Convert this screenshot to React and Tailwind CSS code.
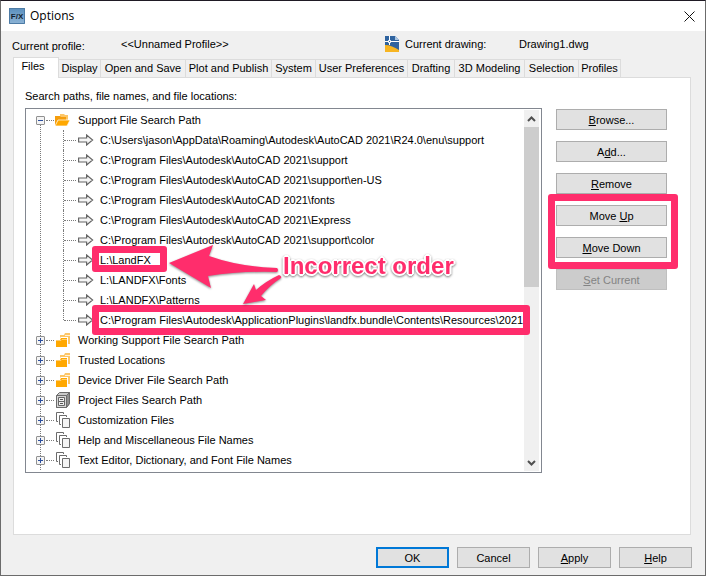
import { useState } from "react";
import clsx from "clsx";

const tabs = [
  { name: "Files", width: "w-[46px]" },
  { name: "Display", width: "w-[42px]" },
  { name: "Open and Save", width: "w-[85px]" },
  { name: "Plot and Publish", width: "w-[86px]" },
  { name: "System", width: "w-[44px]" },
  { name: "User Preferences", width: "w-[92px]" },
  { name: "Drafting", width: "w-[47px]" },
  { name: "3D Modeling", width: "w-[70px]" },
  { name: "Selection", width: "w-[54px]" },
  { name: "Profiles", width: "w-[42px]" },
];

const supportPaths = [
  "C:\\Users\\jason\\AppData\\Roaming\\Autodesk\\AutoCAD 2021\\R24.0\\enu\\support",
  "C:\\Program Files\\Autodesk\\AutoCAD 2021\\support",
  "C:\\Program Files\\Autodesk\\AutoCAD 2021\\support\\en-US",
  "C:\\Program Files\\Autodesk\\AutoCAD 2021\\fonts",
  "C:\\Program Files\\Autodesk\\AutoCAD 2021\\Express",
  "C:\\Program Files\\Autodesk\\AutoCAD 2021\\support\\color",
  "L:\\LandFX",
  "L:\\LANDFX\\Fonts",
  "L:\\LANDFX\\Patterns",
  "C:\\Program Files\\Autodesk\\ApplicationPlugins\\landfx.bundle\\Contents\\Resources\\2021",
];

const nodes = [
  { name: "Support File Search Path", Icon: OpenFolderIcon, paths: supportPaths },
  { name: "Working Support File Search Path", Icon: FoldersIcon },
  { name: "Trusted Locations", Icon: FoldersIcon },
  { name: "Device Driver File Search Path", Icon: FoldersIcon },
  { name: "Project Files Search Path", Icon: CabinetIcon },
  { name: "Customization Files", Icon: PagesIcon },
  { name: "Help and Miscellaneous File Names", Icon: PagesIcon },
  { name: "Text Editor, Dictionary, and Font File Names", Icon: PagesIcon },
];

function OpenFolderIcon() {
  return (
    <svg width="16" height="16" viewBox="0 0 16 16" className="shrink-0">
      <path d="M5 2h4l1 1h3v5H5z" fill="#fdc667" />
      <path d="M0 4h5l1 1h5v3H3l-2 5H0z" fill="#f59d0c" />
      <path d="M3 8h12l-3 6H0z" fill="#ffa800" stroke="#fff" strokeWidth="0.7" />
    </svg>
  );
}

function FoldersIcon() {
  return (
    <svg width="16" height="16" viewBox="0 0 16 16" className="shrink-0">
      <path d="M5 3h4l1-2h5v11H5z" fill="#fdc667" />
      <path d="M10 3.500h5" stroke="#fff1d6" />
      <path d="M0 6h5l1-1h7v11H0z" fill="#fff" />
      <path d="M1 8h4l1-2h6v9H1z" fill="#ffa800" />
      <path d="M1 8.500h5l1-1h5" stroke="#ffd58a" strokeWidth="0.800" fill="none" />
    </svg>
  );
}

function CabinetIcon() {
  return (
    <svg width="16" height="16" viewBox="0 0 16 16" className="shrink-0">
      <path d="M1.500 3.500l3-3h10v11l-3 4h-10z" fill="#c9c9c9" stroke="#6b6b6b" />
      <path d="M11.500 3.500l3-3v11l-3 4z" fill="#8f8f8f" stroke="#6b6b6b" />
      <path d="M1.500 3.500h10v12h-10z" fill="#d6d6d6" stroke="#6b6b6b" />
      <path d="M3.500 5.500h6v8h-6zM3.500 9.500h6" fill="#eee" stroke="#666" />
      <path d="M5 7.500h3M5 11.500h3" stroke="#555" />
    </svg>
  );
}

function PagesIcon() {
  return (
    <svg width="16" height="16" viewBox="0 0 16 16" className="shrink-0" fill="none" stroke="#6b6b6b">
      <path d="M3 9.500H1.500V0.500h7v1.500" />
      <path d="M6 12.500H4.500V3.500h7v1.500" />
      <path d="M7.500 6.500h7v9h-7z" fill="#f4f4f4" />
    </svg>
  );
}

function ArrowIcon() {
  return (
    <svg width="16" height="12" viewBox="0 0 16 12" className="ml-[2px] shrink-0">
      <path d="M0.600 4h8V1l6 5-6 5V8h-8z" fill="#f5f5f5" stroke="#666" strokeWidth="1.200" />
    </svg>
  );
}

function AppLogo() {
  return (
    <svg width="16" height="16" viewBox="0 0 16 16">
      <defs>
        <linearGradient id="logo" x1="0" y1="0" x2="0" y2="1">
          <stop offset="0" stopColor="#5a8fbd" />
          <stop offset="1" stopColor="#8db4d6" />
        </linearGradient>
      </defs>
      <path d="M0 0h16v16H0z" fill="url(#logo)" />
      <path d="M0.500 0.500h15v15h-15z" fill="none" stroke="#4d7ba5" />
      <text x="8" y="11" textAnchor="middle" fontSize="8" fontWeight="bold" fill="#14222f">
        F/X
      </text>
    </svg>
  );
}

function DrawingIcon() {
  return (
    <svg width="14" height="16" viewBox="0 0 14 16">
      <path d="M0 0h10l4 4v12H0z" fill="#2f639f" />
      <path d="M10 0l4 4h-4z" fill="#a9c4e0" />
      <path d="M0 9c5 0 9 2 14 5v2H0z" fill="#f7b522" />
      <path d="M0 5.500h3M6 5.500h8M4.500 0v4M4.500 7v2" stroke="#fff" />
      <path d="M3.500 4.500h2v2h-2z" fill="none" stroke="#fff" />
    </svg>
  );
}

function PathRow({ path, last }) {
  return (
    <li className="flex h-5 items-center">
      <span
        className={clsx("self-start border-l border-dotted border-[#7a7a7a]", last ? "h-[10px]" : "h-5")}
      />
      <span className="w-3 border-t border-dotted border-[#7a7a7a]" />
      <ArrowIcon />
      <span className="ml-[6px] whitespace-nowrap">{path}</span>
    </li>
  );
}

function TreeNode({ node, first }) {
  const [open, setOpen] = useState(Boolean(node.paths));
  const { Icon } = node;

  return (
    <li>
      <div className="flex h-5 items-center">
        <span className={clsx("-ml-[5px] flex items-end bg-white", first && "h-[15px] self-start")}>
          <button
            type="button"
            aria-label={`Toggle ${node.name}`}
            aria-expanded={open}
            onClick={() => setOpen(!open)}
            className="size-[9px] rounded-[1px] border border-[#919191] bg-[#f4f4f4]"
          >
            <svg width="7" height="7" viewBox="0 0 7 7" stroke="#2c4f9e" className="block">
              <path d={open ? "M1 3.500h5" : "M1 3.500h5M3.500 1v5"} />
            </svg>
          </button>
        </span>
        <span className="mx-px w-2 border-t border-dotted border-[#7a7a7a]" />
        <Icon />
        <span className="ml-[7px] whitespace-nowrap">{node.name}</span>
      </div>
      {open && node.paths && (
        <ul className="ml-[22px]">
          {node.paths.map((path, i) => (
            <PathRow key={path} path={path} last={i === node.paths.length - 1} />
          ))}
        </ul>
      )}
    </li>
  );
}

function ScrollBar() {
  return (
    <div className="my-px mr-[2px] flex w-[15px] flex-col bg-[#f0f0f0]">
      <button type="button" aria-label="Scroll up" className="flex h-[17px] items-center justify-center">
        <svg width="9" height="6" viewBox="0 0 9 6" fill="none" stroke="#505050" strokeWidth="2">
          <path d="M1 5l3.500-3.500L8 5" />
        </svg>
      </button>
      <div className="h-40 bg-[#cdcdcd]" />
      <button type="button" aria-label="Scroll down" className="mt-auto flex h-[17px] items-center justify-center">
        <svg width="9" height="6" viewBox="0 0 9 6" fill="none" stroke="#505050" strokeWidth="2">
          <path d="M1 1l3.500 3.500L8 1" />
        </svg>
      </button>
    </div>
  );
}

function PushButton({ children, primary, className, ...props }) {
  return (
    <button
      type="button"
      className={clsx(
        "h-[21px] bg-[#e1e1e1] text-center disabled:border-[#bfbfbf] disabled:bg-[#cccccc] disabled:text-[#838383]",
        primary ? "border-2 border-[#0078d7]" : "border border-[#adadad]",
        className
      )}
      {...props}
    >
      {children}
    </button>
  );
}

// red arrows and caption on top of the tree
function Callouts() {
  return (
    <div className="pointer-events-none absolute inset-0">
      <div className="absolute left-[66px] top-[137px] h-[26px] w-[75px] rounded-[3px] border-[7px] border-[#ff2d6c]" />
      <div className="absolute left-[66px] top-[196px] h-[30px] w-[438px] rounded-[3px] border-[7px] border-[#ff2d6c]" />
      <svg
        width="120"
        height="70"
        viewBox="165 240 120 70"
        fill="#ff2d6c"
        className="absolute left-[139px] top-[131px] drop-shadow-[0_1px_1px_rgba(0,0,0,0.45)]"
      >
        <path d="M169 263L213 245L209 256Q240 267 277 268Q279 270 277 272Q238 271 208 276L211 288Z" />
        <path d="M243 304L254 284L256 290Q266 281 279 275Q282 276 281 278Q270 285 261 296L266 300Z" />
      </svg>
      <div className="absolute left-[257px] top-[143px] text-2xl leading-7 font-bold whitespace-nowrap text-[#ff2d6c] drop-shadow-[0_1px_1px_rgba(0,0,0,0.5)] [text-shadow:2px_0_#fff,-2px_0_#fff,0_2px_#fff,0_-2px_#fff,1px_1px_#fff,-1px_1px_#fff,1px_-1px_#fff,-1px_-1px_#fff]">
        Incorrect order
      </div>
    </div>
  );
}

export default function App() {
  const [tab, setTab] = useState("Files");

  return (
    <div className="flex min-h-screen flex-col border border-[#6b6b6b] border-t-[#1f1a24] bg-[#f0f0f0] font-['Liberation_Sans',Arial,sans-serif] text-[11px] leading-4 text-black">
      <header className="flex h-[30px] items-center bg-white pr-[10px] pl-2">
        <AppLogo />
        <h1 className="ml-[5px] font-['Open_Sans',sans-serif] text-xs">Options</h1>
        <button type="button" aria-label="Close" className="ml-auto">
          <svg width="11" height="11" viewBox="0 0 11 11" stroke="#111" className="block">
            <path d="M0.500 0.500l10 10M10.500 0.500l-10 10" />
          </svg>
        </button>
      </header>

      <div className="grid h-[26px] grid-cols-[109px_264px_20px_114px_1fr] items-center pl-[11px]">
        <span className="pt-1">Current profile:</span>
        <span>&lt;&lt;Unnamed Profile&gt;&gt;</span>
        <DrawingIcon />
        <span>Current drawing:</span>
        <span>Drawing1.dwg</span>
      </div>

      <div role="tablist" className="z-10 ml-3 flex h-[21px] items-end">
        {tabs.map(({ name, width }) => (
          <button
            key={name}
            type="button"
            role="tab"
            aria-selected={tab === name}
            onClick={() => setTab(name)}
            className={clsx(
              "flex shrink-0 justify-center whitespace-nowrap border-[#dcdcdc]",
              width,
              tab === name
                ? "h-[21px] border-x border-t bg-white pr-[6px]"
                : "h-[19px] border-t border-r border-b"
            )}
          >
            {name}
          </button>
        ))}
      </div>

      <main className="mr-[14px] -mt-px ml-3 flex-1 border border-[#dcdcdc] bg-white pt-[10px] pr-[23px] pb-[60px] pl-[11px]">
        <h2 className="h-5">Search paths, file names, and file locations:</h2>
        <div className="flex items-start gap-[14px]">
          <div className="relative flex min-w-0 flex-1 border border-[#828790] bg-white">
            <ul className="mt-px mb-[2px] ml-[14px] min-w-0 flex-1 border-l border-dotted border-[#7a7a7a]">
              {nodes.map((node, i) => (
                <TreeNode key={node.name} node={node} first={i === 0} />
              ))}
            </ul>
            <ScrollBar />
            <Callouts />
          </div>

          <div className="relative flex w-[111px] flex-col gap-[11px] pt-px">
            <PushButton><u>B</u>rowse...</PushButton>
            <PushButton>A<u>d</u>d...</PushButton>
            <PushButton><u>R</u>emove</PushButton>
            <PushButton>Move <u>U</u>p</PushButton>
            <PushButton><u>M</u>ove Down</PushButton>
            <PushButton disabled><u>S</u>et Current</PushButton>
            <div className="pointer-events-none absolute -left-2 top-[86px] h-[75px] w-[130px] rounded-[3px] border-[7px] border-[#ff2d6c]" />
          </div>
        </div>
      </main>

      <footer className="flex justify-end gap-2 pt-3 pr-[13px] pb-[7px]">
        <PushButton primary className="w-[73px]">OK</PushButton>
        <PushButton className="w-[73px]">Cancel</PushButton>
        <PushButton className="w-[73px]"><u>A</u>pply</PushButton>
        <PushButton className="w-[73px]"><u>H</u>elp</PushButton>
      </footer>
    </div>
  );
}
